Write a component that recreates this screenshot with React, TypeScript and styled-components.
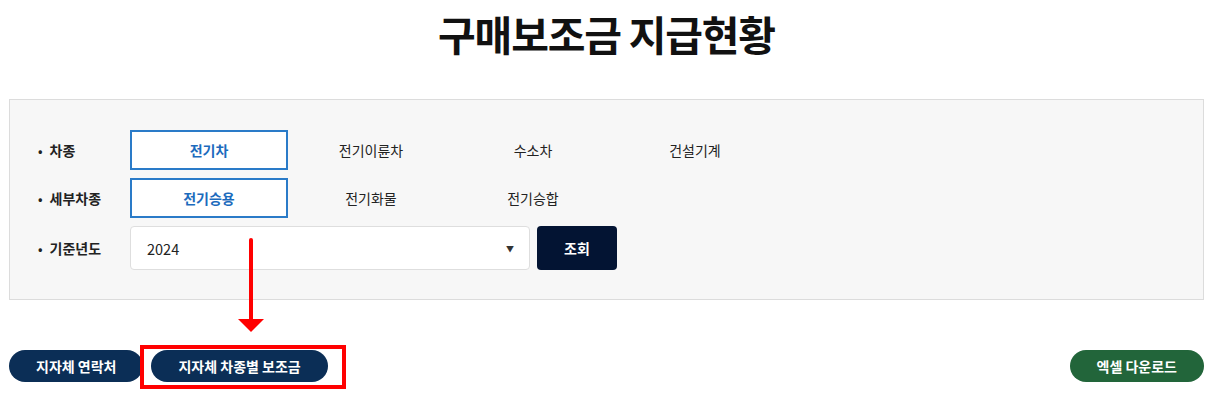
import styled, { createGlobalStyle } from "styled-components";

const GlobalStyle = createGlobalStyle`
  body {
    margin: 0;
    background: #fff;
    font-family: "Noto Sans CJK KR", "Noto Sans", sans-serif;
    color: #222;
  }
`;

const categories = ["전기차", "전기이륜차", "수소차", "건설기계"];
const subCategories = ["전기승용", "전기화물", "전기승합"];

function App() {
  return (
    <>
      <GlobalStyle />
      <Page>
        <Title>구매보조금 지급현황</Title>
        <SearchPanel>
          <FilterRow>
            <Label>차종</Label>
            <TabGroup>
              {categories.map((name, i) => (
                <Tab key={name} $active={i === 0}>
                  {name}
                </Tab>
              ))}
            </TabGroup>
          </FilterRow>
          <FilterRow>
            <Label>세부차종</Label>
            <TabGroup>
              {subCategories.map((name, i) => (
                <Tab key={name} $active={i === 0}>
                  {name}
                </Tab>
              ))}
            </TabGroup>
          </FilterRow>
          <FilterRow>
            <Label>기준년도</Label>
            <YearSelect>
              <span>2024</span>
              <Caret>▼</Caret>
            </YearSelect>
            <SearchButton>조회</SearchButton>
          </FilterRow>
        </SearchPanel>
        <ActionBar>
          <ActionGroup>
            <PillButton $tone="navy">지자체 연락처</PillButton>
            <PillButton $tone="navy">지자체 차종별 보조금</PillButton>
          </ActionGroup>
          <PillButton $tone="green">엑셀 다운로드</PillButton>
        </ActionBar>

        {/* annotation overlay */}
        <Arrow>
          <svg width="28" height="96" viewBox="0 0 28 96">
            <line x1="14" y1="2" x2="14" y2="82" stroke="#f00" strokeWidth="4" strokeLinecap="round" />
            <polygon points="1,81 27,81 14,94" fill="#f00" />
          </svg>
        </Arrow>
        <Highlight />
      </Page>
    </>
  );
}

const Page = styled.div`
  position: relative;
  width: 1195px;
  margin-left: 9px;
  padding-bottom: 38px;
`;

const Title = styled.h1`
  margin: 0;
  padding-top: 6px;
  height: 99px;
  box-sizing: border-box;
  text-align: center;
  font-size: 41px;
  line-height: 54px;
  font-weight: 700;
  letter-spacing: -1.2px;
  color: #111;
`;

const SearchPanel = styled.section`
  display: flex;
  flex-direction: column;
  gap: 8px;
  padding: 30px 28px 29px;
  background: #f7f7f7;
  border: 1px solid #dcdcdc;
  box-sizing: border-box;
`;

const FilterRow = styled.div`
  display: flex;
  align-items: center;
  gap: 7px;
`;

const Label = styled.div`
  width: 85px;
  flex: none;
  font-size: 14px;
  font-weight: 700;
  color: #222;
  &::before {
    content: "•";
    font-size: 12px;
    margin-right: 7px;
  }
`;

const TabGroup = styled.div`
  display: flex;
  gap: 4px;
`;

const Tab = styled.button<{ $active?: boolean }>`
  width: 158px;
  height: 40px;
  box-sizing: border-box;
  font-family: inherit;
  font-size: 14px;
  font-weight: ${(p) => (p.$active ? 700 : 400)};
  color: ${(p) => (p.$active ? "#1c6bbd" : "#222")};
  background: ${(p) => (p.$active ? "#fff" : "transparent")};
  border: 2px solid ${(p) => (p.$active ? "#2a7bc8" : "transparent")};
  padding: 0;
`;

const YearSelect = styled.div`
  width: 400px;
  height: 44px;
  box-sizing: border-box;
  display: flex;
  align-items: center;
  justify-content: space-between;
  padding: 0 15px 0 16px;
  background: #fff;
  border: 1px solid #dedede;
  border-radius: 4px;
  font-size: 14.5px;
  color: #222;
`;

const Caret = styled.span`
  font-size: 8px;
  color: #333;
`;

const SearchButton = styled.button`
  width: 80px;
  height: 44px;
  border: none;
  border-radius: 4px;
  background: #031433;
  color: #fff;
  font-family: inherit;
  font-size: 14px;
  font-weight: 700;
`;

const ActionBar = styled.div`
  display: flex;
  justify-content: space-between;
  align-items: center;
  margin-top: 50px;
`;

const ActionGroup = styled.div`
  display: flex;
  gap: 8px;
`;

const PillButton = styled.button<{ $tone: "navy" | "green" }>`
  height: 32px;
  padding: 0 27px;
  border: none;
  border-radius: 16px;
  background: ${(p) => (p.$tone === "navy" ? "#0b2e56" : "#22653a")};
  color: #fff;
  font-family: inherit;
  font-size: 14px;
  font-weight: 700;
  white-space: nowrap;
`;

const Arrow = styled.div`
  position: absolute;
  left: 228px;
  top: 238px;
  line-height: 0;
`;

const Highlight = styled.div`
  position: absolute;
  left: 131px;
  top: 345px;
  width: 206px;
  height: 44px;
  box-sizing: border-box;
  border: 4px solid #f00;
  pointer-events: none;
`;

export default App;
